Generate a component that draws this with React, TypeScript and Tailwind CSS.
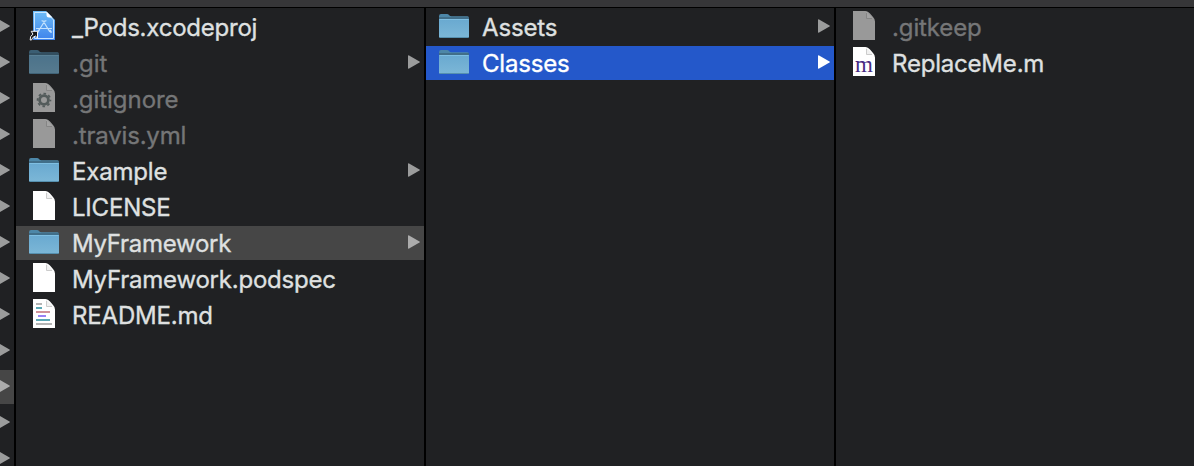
import React from 'react';

type Kind = 'folder' | 'file' | 'xcode' | 'gear' | 'markdown' | 'objc';
type Entry = {
  name: string;
  kind: Kind;
  dim?: boolean;
  arrow?: boolean;
  state?: 'path' | 'active';
  tracking: string;
};

const first: Entry[] = [
  { name: '_Pods.xcodeproj', kind: 'xcode', tracking: 'tracking-[-0.22px]' },
  { name: '.git', kind: 'folder', dim: true, arrow: true, tracking: 'tracking-[0px]' },
  { name: '.gitignore', kind: 'gear', dim: true, tracking: 'tracking-[-0.05px]' },
  { name: '.travis.yml', kind: 'file', dim: true, tracking: 'tracking-[-0.18px]' },
  { name: 'Example', kind: 'folder', arrow: true, tracking: 'tracking-[-0.18px]' },
  { name: 'LICENSE', kind: 'file', tracking: 'tracking-[-0.2px]' },
  { name: 'MyFramework', kind: 'folder', arrow: true, state: 'path', tracking: 'tracking-[-0.28px]' },
  { name: 'MyFramework.podspec', kind: 'file', tracking: 'tracking-[-0.22px]' },
  { name: 'README.md', kind: 'markdown', tracking: 'tracking-[-0.18px]' },
];
const second: Entry[] = [
  { name: 'Assets', kind: 'folder', arrow: true, tracking: 'tracking-[-0.15px]' },
  { name: 'Classes', kind: 'folder', arrow: true, state: 'active', tracking: 'tracking-[-0.2px]' },
];
const third: Entry[] = [
  { name: '.gitkeep', kind: 'file', dim: true, tracking: 'tracking-[-0.12px]' },
  { name: 'ReplaceMe.m', kind: 'objc', tracking: 'tracking-[-0.2px]' },
];

function Folder() {
  return (
    <>
      <path d="M1 6.2Q1 4 3 4H9Q10.4 4 11.2 5.2Q12 6.3 13.5 6.3H29.5Q31 6.3 31 8V14H1Z" fill="#4d87a8" />
      <path d="M1 8H31" stroke="#36566b" strokeWidth="1" />
      <path d="M1 9H31V26.2Q31 28 29.2 28H2.8Q1 28 1 26.2Z" fill="url(#folderFace)" />
      <path d="M1.5 9.5H30.5" stroke="#7fbfe2" strokeWidth="1" />
      <path d="M1.5 27.5H30.5" stroke="#5690af" strokeWidth="1" />
    </>
  );
}

function Page({ gray }: { gray?: boolean }) {
  return (
    <>
      <path d="M5 1H17.5Q20 1.2 22 3.6L25 7Q27 9 27 11.5V30H5Z" fill={gray ? '#999999' : '#ffffff'} />
      <path d="M18 2V7.2Q18 8.5 19.3 8.5H25L18.2 1.6Z" fill={gray ? '#a3a3a3' : '#f1f1f1'} />
      <path d="M18.5 3V8.5H24" fill="none" stroke={gray ? '#858585' : '#cccccc'} strokeWidth="1" />
    </>
  );
}

function Icon({ kind, dim }: { kind: Kind; dim?: boolean }) {
  return (
    <svg className={`h-[34px] w-8 shrink-0 ${dim && kind === 'folder' ? 'opacity-60' : ''}`} viewBox="0 0 32 34">
      {kind === 'folder' && <Folder />}
      {(kind === 'file' || kind === 'gear' || kind === 'markdown' || kind === 'objc') && <Page gray={dim} />}
      {kind === 'gear' && (
        <g stroke="#535b5b" fill="none">
          <circle cx="16" cy="18" r="4.4" strokeWidth="2.8" />
          <circle cx="16" cy="18" r="6.4" strokeWidth="1.8" strokeDasharray="2.6 2.427" strokeDashoffset="1.3" />
        </g>
      )}
      {kind === 'markdown' && (
        <g strokeWidth="2">
          <path d="M8 6H14M8 26H24" stroke="#b5b5b5" />
          <path d="M8 10H14M8 22H22" stroke="#5ba7b4" />
          <path d="M8 14H22" stroke="#d0929a" />
          <path d="M10 18H18" stroke="#9a82f4" />
        </g>
      )}
      {kind === 'objc' && (
        <text x="16" y="25.6" textAnchor="middle" fontFamily="Liberation Serif, serif" fontSize="23" fill="#472b83">m</text>
      )}
      {kind === 'xcode' && (
        <>
          <path d="M5 1H18L27 10V30H5Z" fill="url(#xcodeFace)" />
          <path d="M6.5 28.5V2.5H18.5L25.5 10V28.5Z" fill="none" stroke="#c7e5ff" strokeWidth="1" />
          <path d="M18.5 1.5V5Q18.5 7.5 21 7.5H24.5Z" fill="#ffffff" />
          <g fill="none" stroke="#c4e3fd" strokeWidth="1.2" strokeLinecap="round">
            <path d="M15.2 11L21.6 21.5M16.8 11L10.8 20.5M8.5 18.5H23.5M14 10.8Q16 12.2 18 10.8" />
            <path d="M10.5 20.5L9.7 22M22 20.5L23 22" strokeWidth="1.8" />
          </g>
          <path d="M2.2 30Q1.6 26 5 24.2L3.2 21.3H9.5V28L7.4 26Q4.2 27 3.5 30Z" fill="#151719" stroke="#f4f4f4" strokeWidth="1" />
        </>
      )}
    </svg>
  );
}

function Arrow({ color }: { color: string }) {
  return (
    <svg className="h-[34px] w-3 shrink-0" viewBox="0 0 12 34">
      <path d="M0 10Q0 8.8 1.1 9.4L11.5 15.5Q12.3 16 11.5 16.5L1.1 22.6Q0 23.2 0 22Z" fill={color} />
    </svg>
  );
}

function Row({ entry }: { entry: Entry }) {
  const background = entry.state === 'active' ? 'bg-[#2458ca]' : entry.state === 'path' ? 'bg-[#464646]' : '';
  const text = entry.state === 'active' ? 'text-white' : entry.dim ? 'text-[#757677]' : 'text-[#dfe0e0]';
  const arrow = entry.state === 'active' ? '#ffffff' : entry.state === 'path' ? '#acacac' : '#9b9c9c';
  return (
    <li className={`flex h-[34px] shrink-0 items-center pr-1 pl-3 ${background}`}>
      <Icon kind={entry.kind} dim={entry.dim} />
      <span className={`ml-3 grow pt-0.5 text-2xl leading-[34px] whitespace-nowrap [-webkit-text-stroke:0.35px_currentColor] ${text} ${entry.tracking}`}>{entry.name}</span>
      {entry.arrow && <Arrow color={arrow} />}
    </li>
  );
}

function Column({ entries, className }: { entries: Entry[]; className: string }) {
  return (
    <ul className={`flex flex-col gap-0.5 pt-0.5 ${className}`}>
      {entries.map((entry) => <Row key={entry.name} entry={entry} />)}
    </ul>
  );
}

export default function App() {
  return (
    <main className="flex h-[466px] w-[1194px] flex-col overflow-hidden bg-[#202123] font-['Inter',sans-serif]">
      <svg className="absolute h-0 w-0" aria-hidden="true">
        <defs>
          <linearGradient id="folderFace" x2="0" y2="1">
            <stop stopColor="#69a9d0" />
            <stop offset="1" stopColor="#7cb7d7" />
          </linearGradient>
          <linearGradient id="xcodeFace" x2="0" y2="1">
            <stop stopColor="#6dbcf6" />
            <stop offset="1" stopColor="#3e83ec" />
          </linearGradient>
        </defs>
      </svg>
      <header className="h-2 shrink-0 border-b border-black bg-[#363638]" />
      <div className="flex min-h-0 grow">
        <ul className="flex w-4 shrink-0 flex-col gap-0.5 overflow-hidden border-r-2 border-black pt-0.5">
          {Array.from({ length: 13 }, (_, index) => (
            <li key={index} className={`flex h-[34px] shrink-0 justify-end overflow-hidden pr-1 ${index === 10 ? 'bg-[#464646]' : ''}`}>
              <Arrow color={index === 10 ? '#acacac' : '#9b9c9c'} />
            </li>
          ))}
        </ul>
        <Column entries={first} className="w-[410px] shrink-0 border-r-2 border-black" />
        <Column entries={second} className="w-[410px] shrink-0 border-r-2 border-black" />
        <Column entries={third} className="grow" />
      </div>
    </main>
  );
}
